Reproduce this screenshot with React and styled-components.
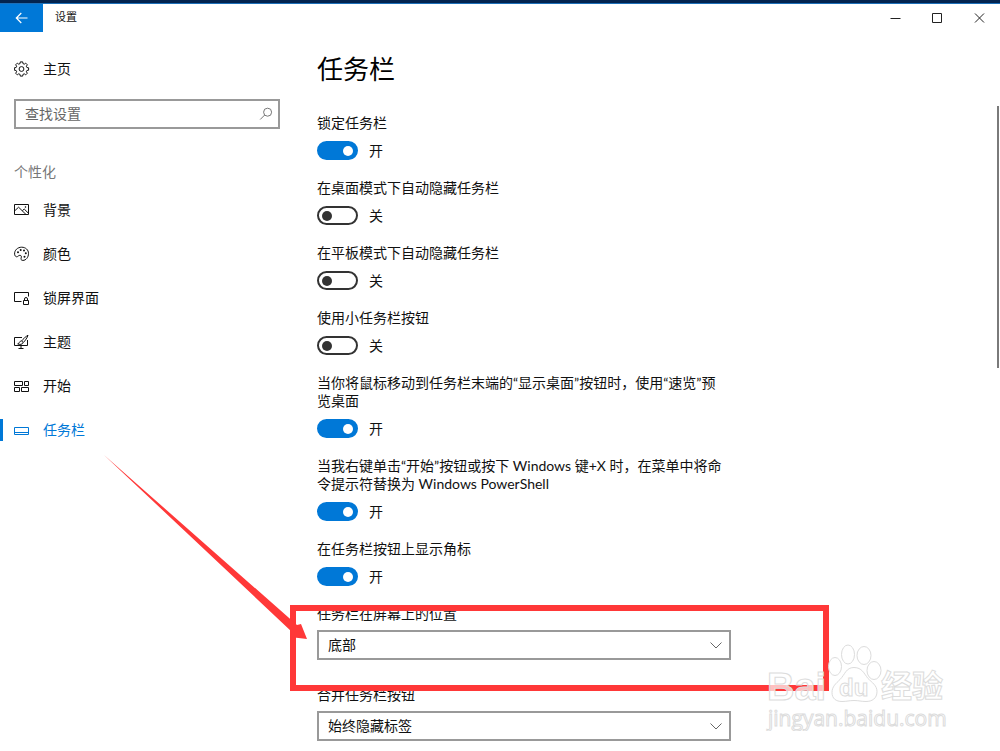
import { useState } from 'react';
import styled, { createGlobalStyle } from 'styled-components';

const NAV_ITEMS = [
    { id: 'background', label: '背景', Icon: PictureIcon },
    { id: 'colors', label: '颜色', Icon: PaletteIcon },
    { id: 'lockscreen', label: '锁屏界面', Icon: LockScreenIcon },
    { id: 'themes', label: '主题', Icon: ThemeIcon },
    { id: 'start', label: '开始', Icon: TilesIcon },
    { id: 'taskbar', label: '任务栏', Icon: TaskbarIcon },
];

const SWITCHES = [
    { id: 'lock', label: '锁定任务栏', on: true },
    { id: 'hideDesktop', label: '在桌面模式下自动隐藏任务栏', on: false },
    { id: 'hideTablet', label: '在平板模式下自动隐藏任务栏', on: false },
    { id: 'small', label: '使用小任务栏按钮', on: false },
    {
        id: 'peek',
        label: '当你将鼠标移动到任务栏末端的“显示桌面”按钮时，使用“速览”预览桌面',
        on: true,
    },
    {
        id: 'powershell',
        label: '当我右键单击“开始”按钮或按下 Windows 键+X 时，在菜单中将命令提示符替换为 Windows PowerShell',
        on: true,
    },
    { id: 'badges', label: '在任务栏按钮上显示角标', on: true },
];

const SELECTS = [
    {
        id: 'position',
        label: '任务栏在屏幕上的位置',
        options: ['底部', '顶部', '靠左', '靠右'],
    },
    {
        id: 'combine',
        label: '合并任务栏按钮',
        options: ['始终隐藏标签', '任务栏已满时', '从不'],
    },
];

// eight flat teeth, two corners on the body and two on the tip of each
const gearPath = () => {
    const points = [];
    for (let i = 0; i < 8; i++) {
        const base = (i * Math.PI) / 4;
        [
            [-0.26, 5.6],
            [-0.17, 7.2],
            [0.17, 7.2],
            [0.26, 5.6],
        ].forEach(([offset, r]) => {
            const x = 7.5 + r * Math.cos(base + offset);
            const y = 8 + r * Math.sin(base + offset);
            points.push(`${x.toFixed(2)} ${y.toFixed(2)}`);
        });
    }
    return `M${points.join('L')}Z`;
};

function GearIcon() {
    return (
        <Icon viewBox="0 0 16 16">
            <path d={gearPath()} />
            <circle cx="7.5" cy="8" r="2.4" />
        </Icon>
    );
}

function PictureIcon() {
    return (
        <Icon viewBox="0 0 16 16">
            <path d="M.5 2.5h14v10H.5z" />
            <path d="M.5 9 4.6 5.2 12 12.5M8.3 8.8l1.9-1.8 4.3 4.3" />
            <circle cx="11.5" cy="5" r=".4" />
        </Icon>
    );
}

function PaletteIcon() {
    return (
        <Icon viewBox="0 0 16 16">
            <path d="M.6 8.2C.3 4.200 3.600 1.200 7.700 1.200c3.900 0 6.800 2.700 6.800 6.200 0 4-2.600 7-5.600 7-1.900 0-2.200-1.200-1.700-2.500.5-1.500 0-2.600-1.300-2.600-1.600 0-1.900 1.500-3.200 1.500C1.500 10.800.7 9.500.6 8.200z" />
            <g fill="currentColor" stroke="none">
                <circle cx="4" cy="6.3" r="1" />
                <circle cx="6.7" cy="4.1" r="1" />
                <circle cx="10" cy="4.5" r="1" />
                <circle cx="11.8" cy="7.3" r="1" />
                <circle cx="10.5" cy="10.7" r="1" />
            </g>
        </Icon>
    );
}

function LockScreenIcon() {
    return (
        <Icon viewBox="0 0 16 16">
            <path d="M7.5 11.5h-7v-9h14v4" />
            <path d="M9.5 10.5h5v4h-5zM10.5 10.5V9a1.5 1.5 0 0 1 3 0v1.5" />
        </Icon>
    );
}

function ThemeIcon() {
    return (
        <Icon viewBox="0 0 16 16">
            <path d="M8 3.5H.5v8h13V6M7 11.5V14M4.5 14.500h5" />
            <path d="M14 1.200c-2 1.200-4.900 3.700-6.400 5.800l1.700 1.500C11.200 6.700 13.300 3.700 14 1.200zM7.400 7.200c-1.400 0-2 .7-2.200 1.500-.2.800-.7 1.100-1.500 1.200 1.800 1 5 .7 5.400-1.400" />
        </Icon>
    );
}

function TilesIcon() {
    return (
        <Icon viewBox="0 0 16 16">
            <path d="M.5 3.5h8v4h-8zM10.500 3.500h4v4h-4zM.5 9.500h5v4h-5zM7.500 9.500h7v4h-7z" />
        </Icon>
    );
}

function TaskbarIcon() {
    return (
        <Icon viewBox="0 0 16 16">
            <path d="M.5 5.5h14v7H.5zM.5 10.5h14" />
        </Icon>
    );
}

const SwitchField = ({ label, on }) => {
    const [checked, setChecked] = useState(on);

    return (
        <SwitchLabel>
            <LabelText>{label}</LabelText>
            <SwitchLine>
                <Switch
                    type="checkbox"
                    role="switch"
                    checked={checked}
                    onChange={e => setChecked(e.target.checked)}
                />
                <SwitchState>{checked ? '开' : '关'}</SwitchState>
            </SwitchLine>
        </SwitchLabel>
    );
};

const SelectField = ({ id, label, options }) => (
    <SelectBlock>
        <LabelText as="label" htmlFor={id}>
            {label}
        </LabelText>
        <SelectBox>
            <Select id={id} defaultValue={options[0]}>
                {options.map(option => (
                    <option key={option}>{option}</option>
                ))}
            </Select>
            <Chevron viewBox="0 0 12 7">
                <path d="M.5.5 6 6 11.5.5" />
            </Chevron>
        </SelectBox>
    </SelectBlock>
);

const App = () => {
    const [current, setCurrent] = useState('taskbar');

    return (
        <Window>
            <GlobalStyle />
            <TitleBar>
                <BackButton aria-label="返回">
                    <svg width="14" height="12" viewBox="0 0 14 12">
                        <path d="M12.5 6h-11M6.3 1 1.300 6l5 5" />
                    </svg>
                </BackButton>
                <WindowTitle>设置</WindowTitle>
                <WindowButton aria-label="最小化">
                    <svg width="11" height="11" viewBox="0 0 11 11">
                        <path d="M.5 5.5h10" />
                    </svg>
                </WindowButton>
                <WindowButton aria-label="最大化">
                    <svg width="11" height="11" viewBox="0 0 11 11">
                        <path d="M.5.5h9v9h-9z" />
                    </svg>
                </WindowButton>
                <WindowButton aria-label="关闭">
                    <svg width="11" height="11" viewBox="0 0 11 11">
                        <path d="M1 .5l9 9M10 .5l-9 9" />
                    </svg>
                </WindowButton>
            </TitleBar>

            <Body>
                <Sidebar>
                    <HomeButton>
                        <GearIcon />
                        主页
                    </HomeButton>
                    <SearchBox>
                        <SearchInput
                            type="text"
                            placeholder="查找设置"
                            aria-label="查找设置"
                        />
                        <SearchIcon viewBox="0 0 14 14">
                            <circle cx="8.6" cy="5.2" r="4" />
                            <path d="M5.7 8 1.2 12.5" />
                        </SearchIcon>
                    </SearchBox>
                    <GroupTitle>个性化</GroupTitle>
                    <nav>
                        {NAV_ITEMS.map(({ id, label, Icon: ItemIcon }) => (
                            <NavButton
                                key={id}
                                $active={id === current}
                                onClick={() => setCurrent(id)}
                            >
                                <ItemIcon />
                                {label}
                            </NavButton>
                        ))}
                    </nav>
                </Sidebar>

                <Main>
                    <PageTitle>任务栏</PageTitle>
                    {SWITCHES.map(item => (
                        <SwitchField key={item.id} {...item} />
                    ))}
                    {SELECTS.map(item => (
                        <SelectField key={item.id} {...item} />
                    ))}
                </Main>
            </Body>

            <ScrollThumb />
            <HighlightFrame />
            <Arrow viewBox="0 0 204 185">
                <path d="M0 0 193 170l4-1 6 15-17-2 2-5z" />
            </Arrow>
            <Watermark viewBox="0 0 190 100">
                <g fill="#fff" fillOpacity=".7" stroke="#dcdcdc">
                    <ellipse cx="71" cy="36" rx="6.5" ry="9" />
                    <ellipse cx="84" cy="24" rx="6.5" ry="9.5" />
                    <ellipse cx="100" cy="25" rx="7" ry="9" />
                    <ellipse cx="110" cy="40" rx="7" ry="9" />
                    <path d="M90 37c8 0 10 6 14 11 4 4 9 7 9 13 0 7-5 10-11 10-5 0-7-1-12-1s-7 1-12 1c-6 0-10-3-10-9s4-9 8-13c5-5 6-12 14-12z" />
                    <BrandText x="3" y="69" $size={38}>
                        Bai
                    </BrandText>
                    <BrandText x="75" y="65" $size={24}>
                        du
                    </BrandText>
                    <BrandText x="117" y="66" $size={31}>
                        经验
                    </BrandText>
                    <SiteText x="4" y="95">
                        jingyan.baidu.com
                    </SiteText>
                </g>
            </Watermark>
        </Window>
    );
};

const GlobalStyle = createGlobalStyle`
    * {
        box-sizing: border-box;
    }
    body {
        margin: 0;
        background: #fff;
    }
    body, button, input, select {
        font-family: Lato, 'Noto Sans CJK SC', sans-serif;
        font-size: 14px;
        color: #111;
    }
    button {
        padding: 0;
        border: none;
        background: none;
    }
`;
const Window = styled.div`
    position: relative;
    min-height: 100vh;
    overflow: hidden;
    border-top: 3px solid #03244f;
`;
const TitleBar = styled.header`
    display: flex;
    align-items: center;
    height: 29px;
    border-top: 1px solid #1c6fb8;
`;
const BackButton = styled.button`
    display: flex;
    align-items: center;
    justify-content: center;
    width: 43px;
    height: 28px;
    background: #0078d7;

    svg {
        fill: none;
        stroke: #fff;
        stroke-width: 1.2;
    }
`;
const WindowTitle = styled.span`
    flex: 1;
    padding: 0 0 2px 12px;
    font-size: 11px;
    line-height: 16px;
`;
const WindowButton = styled.button`
    display: flex;
    align-items: center;
    justify-content: center;
    width: 42px;
    height: 28px;

    svg {
        fill: none;
        stroke: #222;
    }
`;
const Body = styled.div`
    display: grid;
    grid-template-columns: 280px minmax(0, 1fr);
    column-gap: 37px;
`;
const Sidebar = styled.aside`
    padding-top: 15px;
`;
const Icon = styled.svg`
    flex: none;
    width: 16px;
    height: 16px;
    fill: none;
    stroke: currentColor;
    stroke-linejoin: round;
`;
const HomeButton = styled.button`
    display: flex;
    align-items: center;
    gap: 13px;
    width: 100%;
    height: 44px;
    padding-left: 14px;
    line-height: 20px;
`;
const NavButton = styled(HomeButton)`
    color: ${({ $active }) => ($active ? '#0078d7' : '#111')};
    background: ${({ $active }) =>
        $active
            ? 'linear-gradient(#0078d7, #0078d7) left center / 3px 22px no-repeat'
            : 'none'};
`;
const SearchBox = styled.div`
    display: flex;
    align-items: center;
    height: 30px;
    margin: 8px 0 0 14px;
    padding: 0 5px 0 9px;
    border: 2px solid #999;
`;
const SearchInput = styled.input`
    flex: 1;
    min-width: 0;
    padding: 0 0 2px;
    border: none;
    outline: none;
    background: none;

    &::placeholder {
        color: #666;
    }
`;
const SearchIcon = styled.svg`
    width: 14px;
    height: 14px;
    fill: none;
    stroke: #777;
`;
const GroupTitle = styled.h2`
    margin: 33px 0 6px 14px;
    font-size: 14px;
    font-weight: 400;
    line-height: 20px;
    color: #777;
`;
const Main = styled.main`
    padding: 19px 24px 0 0;
`;
const PageTitle = styled.h1`
    margin: 0 0 27px;
    font-size: 26px;
    font-weight: 400;
    line-height: 36px;
    color: #000;
`;
const LabelText = styled.span`
    display: block;
    max-width: 408px;
    line-height: 18px;
`;
const SwitchLabel = styled.label`
    display: block;
    margin-bottom: 19px;
`;
const SwitchLine = styled.span`
    display: flex;
    align-items: center;
    gap: 11px;
    height: 19px;
    margin-top: 9px;
`;
const Switch = styled.input`
    appearance: none;
    display: flex;
    align-items: center;
    width: 41px;
    height: 19px;
    margin: 0;
    padding: 0 3px;
    border: 2px solid #333;
    border-radius: 10px;

    &::before {
        content: '';
        width: 10px;
        height: 10px;
        border-radius: 50%;
        background: #333;
    }
    &:checked {
        justify-content: flex-end;
        border-color: #0078d7;
        background: #0078d7;
    }
    &:checked::before {
        background: #fff;
    }
`;
const SwitchState = styled.span`
    line-height: 18px;
`;
const SelectBlock = styled.div`
    margin-bottom: 26px;

    &:last-child {
        margin-bottom: 8px;
    }
`;
const SelectBox = styled.div`
    display: grid;
    align-items: center;
    max-width: 414px;
    margin-top: 7px;

    > * {
        grid-area: 1 / 1;
    }
`;
const Select = styled.select`
    appearance: none;
    width: 100%;
    height: 30px;
    padding: 0 30px 2px 9px;
    border: 2px solid #999;
    border-radius: 0;
    background: #fff;
`;
const Chevron = styled.svg`
    justify-self: end;
    width: 12px;
    height: 7px;
    margin-right: 9px;
    fill: none;
    stroke: #666;
    pointer-events: none;
`;
const ScrollThumb = styled.div`
    position: absolute;
    top: 103px;
    right: 1px;
    width: 2px;
    height: 262px;
    background: #7a7a7a;
`;
const HighlightFrame = styled.div`
    position: absolute;
    top: 602px;
    left: 290px;
    width: 539px;
    height: 86px;
    border: 6px solid #ff3838;
    pointer-events: none;
`;
const Arrow = styled.svg`
    position: absolute;
    top: 452px;
    left: 104px;
    width: 204px;
    height: 185px;
    fill: #ff3838;
    pointer-events: none;
`;
const Watermark = styled.svg`
    position: absolute;
    top: 627px;
    left: 764px;
    width: 190px;
    height: 101px;
    pointer-events: none;
`;
const BrandText = styled.text`
    font-family: 'Liberation Sans', 'Noto Sans CJK SC', sans-serif;
    font-size: ${({ $size }) => $size}px;
    font-weight: 700;
`;
const SiteText = styled.text`
    font-family: 'Open Sans', sans-serif;
    font-size: 21px;
`;

export default App;
